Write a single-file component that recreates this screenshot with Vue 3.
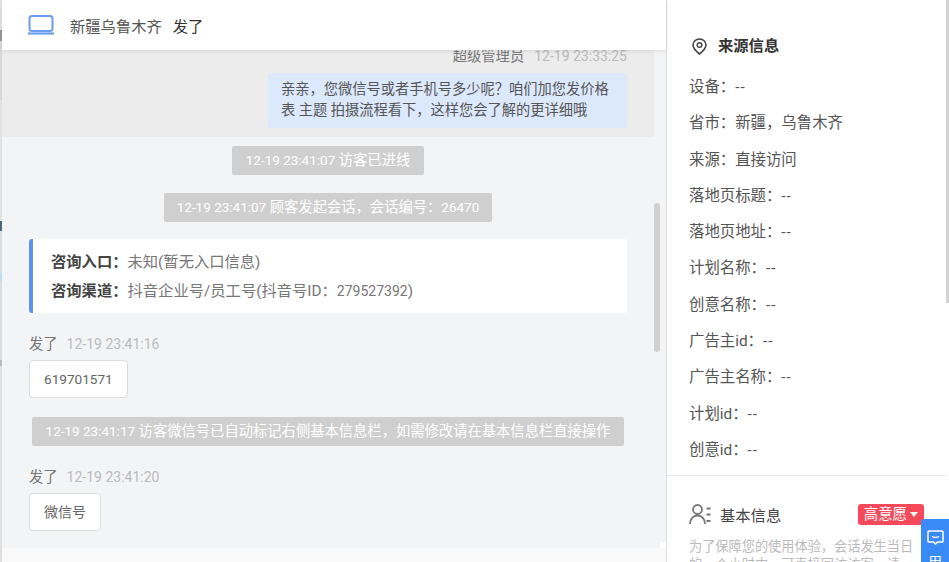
<script setup>
const fields = [
  ['设备', '--'], ['省市', '新疆，乌鲁木齐'], ['来源', '直接访问'], ['落地页标题', '--'], ['落地页地址', '--'],
  ['计划名称', '--'], ['创意名称', '--'], ['广告主id', '--'], ['广告主名称', '--'], ['计划id', '--'], ['创意id', '--']
]
</script>

<template>
  <div class="page">
    <div class="edge"></div>
    <main class="chat">
      <header class="head">
        <svg class="laptop" width="26" height="20" viewBox="0 0 26 20" fill="none">
          <rect x="1.500" y="1" width="23" height="15" rx="2.500" stroke="#6a9cf0" stroke-width="2"/>
          <path d="M0 18.500h26" stroke="#6a9cf0" stroke-width="2.200"/>
        </svg>
        <span class="place">新疆乌鲁木齐</span>
        <span class="who">发了</span>
      </header>
      <div class="log">
        <section class="old">
          <div class="meta right"><span class="name">超级管理员</span><span class="time">12-19 23:33:25</span></div>
          <div class="bubble">亲亲，您微信号或者手机号多少呢？咱们加您发价格表 主题 拍摄流程看下，这样您会了解的更详细哦</div>
        </section>
        <div class="sys s1"><span><em>12-19 23:41:07</em> 访客已进线</span></div>
        <div class="sys s2"><span><em>12-19 23:41:07</em> 顾客发起会话，会话编号：<em>26470</em></span></div>
        <div class="entry">
          <p><b>咨询入口：</b>未知(暂无入口信息)</p>
          <p><b>咨询渠道：</b>抖音企业号/员工号(抖音号ID：<small>279527392</small>)</p>
        </div>
        <div class="msg m1">
          <div class="meta"><span class="name">发了</span><span class="time">12-19 23:41:16</span></div>
          <div class="card num">619701571</div>
        </div>
        <div class="sys s3"><span><em>12-19 23:41:17</em> 访客微信号已自动标记右侧基本信息栏，如需修改请在基本信息栏直接操作</span></div>
        <div class="msg m2">
          <div class="meta"><span class="name">发了</span><span class="time">12-19 23:41:20</span></div>
          <div class="card">微信号</div>
        </div>
        <div class="thumb"></div>
      </div>
      <div class="foot"></div>
    </main>
    <aside class="side">
      <div class="source">
        <h3 class="title">
          <svg width="15" height="17" viewBox="0 0 15 17" fill="none">
            <path d="M7.500 1C3.800 1 1 3.700 1 7.100c0 3.700 3.900 6.900 6.500 8.900C10.100 14 14 10.800 14 7.100 14 3.700 11.200 1 7.500 1Z" stroke="#444" stroke-width="1.600"/>
            <circle cx="7.500" cy="7" r="2.300" stroke="#444" stroke-width="1.500"/>
          </svg>
          来源信息
        </h3>
        <p v-for="f in fields" :key="f[0]" class="field">{{ f[0] }}：<span :class="{ dash: f[1] === '--' }">{{ f[1] }}</span></p>
      </div>
      <div class="basic">
        <div class="basic-head">
          <svg width="22" height="20" viewBox="0 0 22 20" fill="none">
            <circle cx="8.500" cy="5.500" r="4.500" stroke="#777" stroke-width="1.800"/>
            <path d="M1 20c0-5 3-8.500 7.500-8.500S16 15 16 20" stroke="#777" stroke-width="1.800"/>
            <path d="M17.500 4.500h4M17.500 10.500h4M17.500 17h4" stroke="#777" stroke-width="1.800"/>
          </svg>
          <span class="basic-title">基本信息</span>
          <span class="tag">高意愿<i class="caret"></i></span>
        </div>
        <p class="hint">为了保障您的使用体验，会话发生当日的一个小时内，可直接回访访客，请</p>
      </div>
      <div class="side-thumb"></div>
      <div class="float">
        <svg width="17" height="15" viewBox="0 0 17 15" fill="none">
          <path d="M1.800 1h13.400a.8.800 0 0 1 .8.800v9.400a.8.800 0 0 1-.8.800h-4.700l-2 2-2-2H1.800a.8.800 0 0 1-.8-.800V1.800a.8.800 0 0 1 .8-.800Z" stroke="#fff" stroke-width="1.500"/>
          <path d="M5 6.500c1.500 1.200 5.500 1.200 7 0" stroke="#fff" stroke-width="1.500"/>
        </svg>
        <span>用</span>
      </div>
    </aside>
  </div>
</template>

<style>
html, body { margin: 0; overflow: hidden; }
</style>

<style scoped>
.page {
  width: 949px; height: 562px; display: flex; overflow: hidden; position: relative;
  font-family: Roboto, "Noto Sans CJK SC", sans-serif; font-size: 14px; color: #555; background: #f3f4f6;
}
.edge {
  width: 2px; flex: none;
  background: linear-gradient(#e4e4e4 0 30px, #999 30px 41px, #d8d8d8 41px 100px, #e2e2e2 100px 221px, #4a6a78 221px 231px, #dcdcdc 231px 273px, #bcdcf0 273px 281px, #dcdcdc 281px 360px, #bbb 360px 366px, #e0e0e0 366px);
}
.chat { width: 664px; flex: none; display: flex; flex-direction: column; height: 562px; position: relative; }
.head {
  height: 50px; flex: none; background: #fff; display: flex; align-items: center; padding-left: 26px;
  box-shadow: 0 1px 4px rgba(0,0,0,.1); position: relative; z-index: 2; font-size: 15.300px;
}
.laptop { margin-right: 16px; }
.place { color: #555; }
.who { color: #333; margin-left: 11px; }
.log { flex: 1; min-height: 0; position: relative; overflow: hidden; }
.old { background: #ececec; width: 652px; height: 87px; box-sizing: border-box; display: flex; flex-direction: column; align-items: flex-end; padding-right: 27px; }
.meta { display: flex; gap: 9px; line-height: 18px; font-size: 14.300px; }
.meta.right { margin-top: -3px; height: 26px; gap: 10px; }
.name { color: #777; }
.time { color: #bbb; font-size: 14px; }
.bubble { width: 359px; height: 55px; box-sizing: border-box; background: #dce8fc; border-radius: 4px; padding: 6px 13px; font-size: 14.260px; line-height: 21px; color: #555; }
.sys { display: flex; justify-content: center; width: 652px; }
.sys span { background: #cfcfcf; color: #fff; border-radius: 2px; font-size: 14.300px; line-height: 29px; padding: 0 14px; white-space: nowrap; }
.sys em { font-style: normal; font-size: 13.500px; }
.s1 { margin-top: 9px; }
.s2 { margin-top: 18px; }
.s2 span { padding: 0 13px; }
.entry { margin: 17px 0 0 27px; width: 598px; height: 74px; box-sizing: border-box; background: #fff; border-left: 4px solid #5b92ee; border-radius: 3px; padding: 9px 18px 0; font-size: 15.300px; color: #777; }
.entry p { margin: 0; line-height: 29px; }
.entry b { color: #444; font-weight: 700; }
.entry small { font-size: 14px; }
.msg { margin-left: 27px; }
.m1 { margin-top: 22px; }
.m2 { margin-top: 22px; }
.msg .meta { color: #777; height: 20px; }
.card { display: block; width: fit-content; margin-top: 5px; background: #fff; border: 1px solid #dcdcdc; border-radius: 4px; padding: 0 14px; line-height: 36px; font-size: 14px; color: #666; }
.card.num { font-size: 13.600px; }
.s3 { margin-top: 19px; }
.thumb { position: absolute; left: 652px; top: 153px; width: 6px; height: 149px; border-radius: 3px; background: #d0d0d0; }
.foot { height: 14px; flex: none; background: #f9f9fa; position: relative; }
.foot::after { content: ""; position: absolute; right: 0; top: -6px; width: 6px; height: 6px; background: #fff; }
.side { flex: 1; min-width: 0; background: #fff; border-left: 1px solid #dedede; position: relative; overflow: hidden; }
.source { height: 476px; box-sizing: border-box; padding: 36px 0 0 22px; margin-right: 3px; border-bottom: 1px solid #e8e8e8; }
.title { margin: 0 0 13px; padding-left: 3px; display: flex; align-items: center; gap: 11px; font-size: 15.300px; line-height: 20px; font-weight: 700; color: #333; }
.field { margin: 0; font-size: 15.400px; line-height: 36.300px; color: #555; height: 36.300px; white-space: nowrap; }
.dash { letter-spacing: 1px; }
.basic { padding: 25px 0 0 22px; }
.basic-head { display: flex; align-items: center; height: 26px; width: 235px; position: relative; }
.basic-title { margin-left: 9px; font-size: 15.300px; color: #444; }
.tag { margin-left: auto; background: #f64a5a; color: #fff; border-radius: 3px; height: 21px; line-height: 21px; padding: 0 6px 0 6px; font-size: 14.400px; display: flex; align-items: center; }
.caret { margin-left: 3px; border: 4px solid transparent; border-top: 5px solid #fff; border-bottom: 0; }
.hint { margin: 11px 0 0; width: 226px; font-size: 13.200px; line-height: 18px; color: #bbb; }
.side-thumb { position: absolute; right: 0; top: 0; width: 3px; height: 303px; background: #d2d2d2; }
.float { position: absolute; left: 254px; top: 519px; width: 28px; height: 60px; background: #3a8bf8; border-radius: 3px 0 0 0; display: flex; flex-direction: column; align-items: center; padding-top: 11px; box-sizing: border-box; color: #fff; font-size: 14px; line-height: 20px; gap: 7px; }
</style>
